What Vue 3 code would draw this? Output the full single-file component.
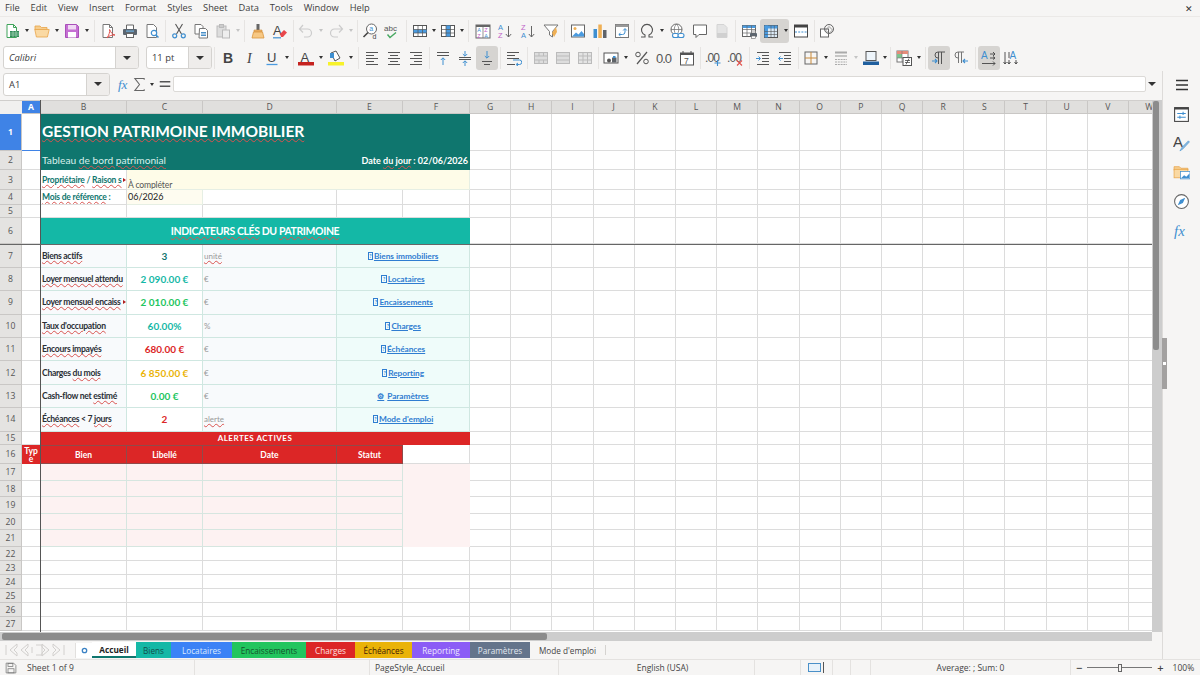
<script setup>
// toolbar icons, 16x16 viewBox
const lines = (ys, x1, x2, c = '#555') => ys.map((y, i) => {
  const a = Array.isArray(x1) ? x1[i] : x1
  const b = Array.isArray(x2) ? x2[i] : x2
  return `<path d="M${a} ${y}H${b}" stroke="${c}" fill="none"/>`
}).join('')
const table = (extra = '', c = '#666') => `<rect x="1.500" y="2.500" width="13" height="11" fill="#fff" stroke="${c}"/>${extra}<path d="M1.500 6.500h13M1.500 10h13M6 2.500v11M10.500 2.500v11" stroke="${c}" stroke-width=".7" fill="none"/>`
const icons = {
  new: `<path d="M3 1.500h6.500l3 3V14.500H3z" fill="#fff" stroke="#3fa35a"/><path d="M9.500 1.500v3h3" fill="none" stroke="#3fa35a"/><rect x="6" y="8" width="9" height="6" fill="#2e8b57"/><path d="M6 10h9M6 12h9M9 8v6M12 8v6" stroke="#bfe3c9" stroke-width=".6"/>`,
  open: `<path d="M1 4V3h5l1.500 1.500H13V7H1z" fill="#f6cd8d" stroke="#e8a54a" stroke-width=".8"/><path d="M.8 6.500h14.400L13.400 14H2.400z" fill="#fad9a3" stroke="#e8a54a" stroke-width=".8"/>`,
  save: `<path d="M1.500 1.500h11l2 2v11h-13z" fill="#c56fd3" stroke="#a94fb9"/><rect x="4" y="2" width="8" height="4.500" fill="#f0d9f4"/><rect x="4" y="9" width="8" height="5.500" fill="#fff"/>`,
  pdf: `<path d="M3 1.500h6.500l3 3V14.500H3z" fill="#fff" stroke="#777"/><path d="M9.500 1.500v3h3" fill="none" stroke="#777"/><path d="M7 15c2-3 3-6 2.600-8.500C11 9.500 12 11.500 15 12c-3-.2-6 .6-8 3z" fill="none" stroke="#e0524d" stroke-width="1"/>`,
  print: `<path d="M4.500 6V2h7v4" fill="#fff" stroke="#666"/><rect x="1" y="6" width="14" height="6" rx="1" fill="#5c6670"/><rect x="4" y="7.500" width="8" height="1.200" fill="#6fb1e0"/><rect x="4.500" y="10.500" width="7" height="4" fill="#fff" stroke="#666"/>`,
  preview: `<path d="M3 1.500h6.500l3 3V14.500H3z" fill="#fff" stroke="#777"/><circle cx="10" cy="10" r="2.700" fill="#fff" stroke="#3f8fd0" stroke-width="1.200"/><path d="M12 12l2.500 2.500" stroke="#3f8fd0" stroke-width="1.500"/>`,
  cut: `<path d="M4.500 1l6 10M11.500 1l-6 10" stroke="#555" stroke-width="1.100" fill="none"/><circle cx="3.700" cy="12.800" r="2" fill="none" stroke="#3f8fd0" stroke-width="1.200"/><circle cx="12.300" cy="12.800" r="2" fill="none" stroke="#3f8fd0" stroke-width="1.200"/>`,
  copy: `<path d="M2 1.500h6l2 2V11H2z" fill="#fff" stroke="#777"/><path d="M6.500 5.500h6l2 2V15h-8.500z" fill="#fff" stroke="#777"/>${lines([9.500, 11, 12.500], 8, 13, '#4a90c8')}`,
  paste: `<rect x="2" y="3" width="9" height="11" fill="#ddd" stroke="#bbb"/><rect x="4.500" y="1.500" width="4" height="3" fill="#ccc" stroke="#bbb"/><rect x="7.500" y="7" width="7" height="8" fill="#eee" stroke="#bbb"/>`,
  clone: `<rect x="6.500" y="1" width="3" height="6" fill="#666"/><path d="M4 7h8v2H4z" fill="#f2b66a" stroke="#c98a3a" stroke-width=".6"/><path d="M3.500 9h9L14 15H2z" fill="#f7c884" stroke="#d9963e" stroke-width=".8"/>`,
  clear: `<text x="1" y="12" font-size="13" font-family="Liberation Sans" fill="#444">A</text><path d="M8 11l4-4 3 2.500-4 4.500H9z" fill="#e8474c"/><path d="M1 14.800h8" stroke="#3f8fd0" stroke-width="1.200"/>`,
  undo: `<path d="M5 2L1.500 6 5 9.500M2 6h7.500a4 4 0 0 1 0 8H6" fill="none" stroke="#ccc" stroke-width="1.200"/>`,
  redo: `<path d="M11 2l3.500 4L11 9.500M14 6H6.500a4 4 0 0 0 0 8H10" fill="none" stroke="#ccc" stroke-width="1.200"/>`,
  find: `<circle cx="9.500" cy="6" r="5" fill="#fff" stroke="#666"/><path d="M6 9.500L1.500 14" stroke="#444" stroke-width="1.600"/><text x="7.200" y="8" font-size="7" font-family="Liberation Sans" fill="#3f8fd0">a</text><text x="10.500" y="15.500" font-size="7" font-family="Liberation Sans" fill="#444">d</text>`,
  spell: `<text x="0" y="8" font-size="8" font-family="Liberation Sans" fill="#555">abc</text><path d="M3.500 11.500l2.500 3 6-5" fill="none" stroke="#46a860" stroke-width="1.400"/>`,
  rows: table('<rect x="1.500" y="6.500" width="13" height="3.500" fill="#4a9be0"/>', '#555'),
  cols: table('<rect x="6" y="2.500" width="4.500" height="11" fill="#4a9be0"/>', '#555'),
  sort: `<rect x="1" y="2" width="14" height="13" fill="#fff" stroke="#666"/><rect x="1" y="2" width="14" height="2" fill="#666"/><path d="M8 4v11" stroke="#666" stroke-width=".7"/><text x="2.300" y="9" font-size="5.500" font-family="Liberation Sans" fill="#3f8fd0">A</text><text x="2.300" y="14.500" font-size="5.500" font-family="Liberation Sans" fill="#c060c8">Z</text><text x="9.300" y="9" font-size="5.500" font-family="Liberation Sans" fill="#c060c8">Z</text><text x="9.300" y="14.500" font-size="5.500" font-family="Liberation Sans" fill="#3f8fd0">A</text>`,
  asc: `<text x="1" y="7" font-size="7.500" font-family="Liberation Sans" fill="#3f8fd0">A</text><text x="1" y="15" font-size="7.500" font-family="Liberation Sans" fill="#c060c8">Z</text><path d="M11.500 3v11M8.800 11l2.700 3 2.700-3" fill="none" stroke="#666"/>`,
  desc: `<text x="1" y="7" font-size="7.500" font-family="Liberation Sans" fill="#c060c8">Z</text><text x="1" y="15" font-size="7.500" font-family="Liberation Sans" fill="#3f8fd0">A</text><path d="M11.500 3v11M8.800 11l2.700 3 2.700-3" fill="none" stroke="#666"/>`,
  filter: `<path d="M1 2h14L9.500 8.500V14L6.500 12V8.500z" fill="#fff" stroke="#777"/><path d="M9 10l4-6 1 5-3 5z" fill="#efb055"/>`,
  image: `<rect x="1.500" y="2" width="13" height="12" fill="#fff" stroke="#666"/><circle cx="5" cy="5.500" r="1.500" fill="#efb055"/><path d="M2 13.500l4-4 2.500 2 3-3.500 2.500 3v2.500z" fill="#4a9be0"/>`,
  chart: `<rect x="1.500" y="6" width="3.500" height="9" fill="#3f8fd0"/><rect x="6.300" y="1.500" width="3.500" height="13.500" fill="#efb055"/><rect x="11" y="7" width="3.500" height="8" fill="#5f6368"/>`,
  pivot: `<rect x="1.500" y="1.500" width="13" height="13" fill="#fff" stroke="#777"/><rect x="1.500" y="1.500" width="13" height="2.500" fill="#999"/><path d="M5 11.500h3.500a2.500 2.500 0 0 0 2.500-2.500V6M9.200 7.500L11 5.500l1.800 2M6.500 10l-1.700 1.500 1.700 1.500" fill="none" stroke="#3f8fd0"/>`,
  omega: `<path d="M2 14h4v-2a5.500 5.500 0 1 1 4 0v2h4" fill="none" stroke="#555" stroke-width="1.100"/>`,
  link: `<circle cx="7.500" cy="6.500" r="5.500" fill="#fff" stroke="#666"/><path d="M2 6.500h11M7.500 1c-3 3-3 8 0 11M7.500 1c3 3 3 8 0 11" fill="none" stroke="#666" stroke-width=".7"/><rect x="3.500" y="10.500" width="6" height="4" rx="2" fill="#fff" stroke="#3f8fd0" stroke-width="1.100"/><rect x="9" y="10.500" width="6" height="4" rx="2" fill="#fff" stroke="#3f8fd0" stroke-width="1.100"/>`,
  comment: `<path d="M1.500 2h13v9.500H7L4 14.500v-3H1.500z" fill="#fff" stroke="#666"/>`,
  headers: `<path d="M3 1.500h7l3 3V14.500H3z" fill="#e4e4e4" stroke="#d4d4d4"/><rect x="3" y="10" width="10" height="4.500" fill="#d0d0d0"/>`,
  freezep: `${table('<rect x="1.500" y="2.500" width="13" height="2.500" fill="#4a9be0"/>', '#666')}<rect x="9" y="10" width="7" height="4" rx="1" fill="#5c6670"/><rect x="10.500" y="8" width="4" height="2" fill="#fff" stroke="#666" stroke-width=".6"/><rect x="10.500" y="13" width="4" height="2.500" fill="#fff" stroke="#666" stroke-width=".6"/>`,
  freeze: `<rect x="1.500" y="2.500" width="13" height="12" fill="#dcebf7" stroke="#555"/><rect x="1.500" y="2.500" width="13" height="3" fill="#4a9be0"/><rect x="1.500" y="2.500" width="3.500" height="12" fill="#4a9be0"/><path d="M1.500 8.500h13M1.500 11.500h13M8 2.500v12M11.300 2.500v12" stroke="#555" stroke-width=".6"/>`,
  split: `<rect x="1.500" y="2" width="13" height="12" fill="#fff" stroke="#444"/><rect x="1.500" y="2" width="13" height="2.500" fill="#444"/><path d="M2 9h12" stroke="#3f8fd0" stroke-dasharray="2 1.200"/>`,
  shapes: `<rect x="1.500" y="6" width="8" height="8" fill="#fff" stroke="#666"/><circle cx="10" cy="6" r="4.500" fill="none" stroke="#666"/><path d="M10 3.500L13.500 7 10 10.500 6.500 7z" fill="none" stroke="#777" stroke-width=".7"/>`,
  bold: `<text x="3" y="13" font-size="14" font-weight="700" font-family="Liberation Sans" fill="#444">B</text>`,
  italic: `<text x="5" y="13" font-size="14" font-style="italic" font-family="Liberation Serif" fill="#444">I</text>`,
  under: `<text x="3" y="12" font-size="13" font-family="Liberation Sans" fill="#444">U</text><path d="M2.500 14.500h11" stroke="#4a9be0" stroke-width="1.300"/>`,
  color: `<text x="2.500" y="11.500" font-size="13" font-family="Liberation Sans" fill="#444">A</text><rect x="0" y="12" width="16" height="3.500" fill="#c5221f"/>`,
  hilite: `<path d="M3 3l5-2 4 7-5 3z" fill="#fff" stroke="#555"/><path d="M2 3h4v5H2z" fill="#3f8fd0"/><rect x="0" y="12" width="16" height="3.500" fill="#f7f22a"/>`,
  left: lines([2.500, 5.500, 8.500, 11.500, 14.500], 2, [14, 10, 14, 10, 14]),
  center: lines([2.500, 5.500, 8.500, 11.500, 14.500], [2, 4, 2, 4, 2], [14, 12, 14, 12, 14]),
  right: lines([2.500, 5.500, 8.500, 11.500, 14.500], [2, 6, 2, 6, 2], 14),
  top: `${lines([2.500, 5.500], 2, 14)}<path d="M8 15V8M5.800 10L8 7.800 10.200 10" fill="none" stroke="#3f8fd0"/>`,
  vmid: `${lines([7.500, 9.500], 2, 14)}<path d="M8 1v5M5.800 4L8 6.200 10.200 4M8 16v-5M5.800 13L8 10.800 10.200 13" fill="none" stroke="#3f8fd0"/>`,
  bottom: `${lines([11.500, 14.500], [3, 5], [13, 11])}<path d="M8 1v7M5.800 6L8 8.200 10.200 6" fill="none" stroke="#3f8fd0"/>`,
  wrap: `${lines([2.500, 5.500, 8.500, 14.500], 1, [13, 9, 13, 9])}<path d="M11 14.500h2.500a2 2 0 0 0 0-4.500H7M12 13l-2 1.500 2 1.500" fill="none" stroke="#3f8fd0"/>`,
  merge: `<rect x="1.500" y="2.500" width="13" height="11" fill="#ddd" stroke="#bbb"/><path d="M1.500 6h13M1.500 10h13M6 2.500v3.500M10.500 2.500v3.500M6 10v3.500M10.500 10v3.500" stroke="#bbb" fill="none"/>`,
  unmerge: `<rect x="1.500" y="2.500" width="13" height="11" fill="#ddd" stroke="#bbb"/><path d="M1.500 6h13M1.500 10h13" stroke="#bbb" fill="none"/>`,
  split3: `<rect x="1.500" y="2.500" width="13" height="11" fill="#e4e4e4" stroke="#bbb"/><path d="M1.500 6h13M1.500 10h13M6 2.500v11M10.500 2.500v11" stroke="#bbb" fill="none"/>`,
  money: `<rect x="1" y="3" width="14" height="10" fill="#fff" stroke="#555"/><circle cx="6" cy="10.500" r="2" fill="#555"/><rect x="9" y="7.500" width="4.500" height="5" fill="#5f6368"/><rect x="10" y="6" width="2.500" height="2" fill="#3f8fd0"/>`,
  percent: `<path d="M3 14L13 2" stroke="#555" stroke-width="1.200"/><circle cx="4" cy="4.500" r="2.300" fill="none" stroke="#555"/><circle cx="12" cy="11.500" r="2.300" fill="none" stroke="#555"/>`,
  number: `<text x="0" y="13" font-size="13" font-family="Liberation Sans" fill="#555" textLength="16">0.0</text>`,
  date: `<rect x="1.500" y="3" width="13" height="12" fill="#fff" stroke="#555"/><rect x="1.500" y="3" width="13" height="2" fill="#555"/><path d="M4 1v3M12 1v3" stroke="#555"/><text x="5" y="13.500" font-size="8.500" font-family="Liberation Sans" fill="#555">7</text>`,
  addDec: `<text x="0" y="12" font-size="12" font-family="Liberation Sans" fill="#555" textLength="15">.00</text><path d="M12.500 10v6M9.500 13h6" stroke="#3f8fd0" stroke-width="1.100"/>`,
  delDec: `<text x="0" y="12" font-size="12" font-family="Liberation Sans" fill="#555" textLength="15">.00</text><path d="M10 10.500l5 5M15 10.500l-5 5" stroke="#e0524d" stroke-width="1.100"/>`,
  indent: `${lines([2.500, 5.500, 8.500, 11.500, 14.500], [2, 7, 7, 7, 2], 14)}<path d="M1 8.500h4M3.500 6.500l2 2-2 2" fill="none" stroke="#3f8fd0"/>`,
  outdent: `${lines([2.500, 5.500, 8.500, 11.500, 14.500], [2, 7, 7, 7, 2], 14)}<path d="M6 8.500H1.500M3.500 6.500l-2 2 2 2" fill="none" stroke="#3f8fd0"/>`,
  border: `<rect x="2" y="2" width="12" height="12" fill="none" stroke="#666"/><path d="M8 2v12M2 8h12" stroke="#c98a3a"/>`,
  line: `<path d="M2 2.500h12" stroke="#aaa" stroke-width="2"/><path d="M2 6h12" stroke="#aaa" stroke-width="1.300"/><path d="M2 9.500h12M2 12h12M2 14.500h12" stroke="#aaa" stroke-dasharray="2 .8"/>`,
  bcolor: `<rect x="3" y="1.500" width="10" height="9" fill="#eef5fb" stroke="#555"/><rect x="0" y="11.500" width="16" height="3.500" fill="#1f5f9e"/>`,
  cond: `<rect x="1" y="1" width="11" height="11" fill="#fff" stroke="#777"/><rect x="1" y="1" width="11" height="3" fill="#e58c7a"/><rect x="1" y="4" width="5" height="4" fill="#7ec48f"/><path d="M1 8h11M6 1v11" stroke="#777" stroke-width=".6"/><rect x="7" y="7.500" width="8.500" height="8" fill="#fff" stroke="#555"/><path d="M9 10.500h5M9 12.500h5M10 14.500l3-6" stroke="#333" stroke-width=".7"/>`,
  ltr: `<path d="M7.500 2v12M10.500 2v12M14 2H7A3 3 0 0 0 7 8h.5" fill="none" stroke="#555"/><path d="M1 11h5M4 9l2 2-2 2" fill="none" stroke="#3f8fd0" stroke-width="1.100"/>`,
  rtl: `<path d="M5.500 2v11M8.500 2v11M11 2H5A3 3 0 0 0 5 8h.5" fill="none" stroke="#777"/><path d="M15 11h-5M12 9l-2 2 2 2" fill="none" stroke="#3f8fd0" stroke-width="1.100"/>`,
  horiz: `<text x="0" y="9" font-size="10" font-family="Liberation Sans" fill="#3f8fd0">A</text><path d="M9 4h5M12 2l2 2-2 2M9 8h5M12 6.500l2 1.500-2 1.500M1 13.500h13M12 11.500l2 2-2 2" fill="none" stroke="#444" stroke-width=".9"/>`,
  vert: `<text x="6.500" y="9" font-size="10" font-family="Liberation Sans" fill="#3f8fd0">A</text><path d="M2 2v12M.5 12l1.500 2 1.500-2M6 10v4M4.500 12l1.500 2 1.500-2M13 10v4M11.500 12l1.500 2 1.500-2" fill="none" stroke="#444" stroke-width=".9"/><path d="M6 2v6" stroke="#444" stroke-width=".9"/>`,
  fx: `<text x="1" y="13" font-size="14" font-style="italic" font-family="Liberation Serif" fill="#3f8fd0">fx</text>`,
  sum: `<path d="M13 3V1.500H3L8 8l-5 6.500h10V13" fill="none" stroke="#666" stroke-width="1.100"/>`,
  equals: `<path d="M2 5.500h12M2 10.500h12" stroke="#555" stroke-width="1.800"/>`,
  burger: `<path d="M2 3.500h12M2 8h12M2 12.500h12" stroke="#333" stroke-width="1.300"/>`,
  props: `<rect x="1.500" y="1.500" width="13" height="13" fill="#fff" stroke="#444"/><rect x="1.500" y="1.500" width="13" height="1.800" fill="#444"/><path d="M4 7h8M4 10.500h8" stroke="#3f8fd0"/><path d="M9.500 5.500v3M6.500 9v3" stroke="#3f8fd0"/>`,
  styles: `<text x="0" y="11.500" font-size="14" font-family="Liberation Sans" fill="#444">A</text><path d="M6.500 15l2-3.500 6-6 1 1-6 6.500z" fill="#8ab8de" stroke="#3f8fd0" stroke-width=".5"/>`,
  gallery: `<path d="M1 4V2.500h5L7.500 4H14v2H1z" fill="#f6cd8d" stroke="#e8a54a" stroke-width=".7"/><rect x="1" y="5" width="13" height="8" fill="#fad9a3" stroke="#e8a54a" stroke-width=".7"/><rect x="7" y="7" width="9" height="7" fill="#fff" stroke="#3f8fd0" stroke-width=".7"/><path d="M7.500 13.500l3-3 2 1.500 3-3v4.500z" fill="#3f8fd0"/>`,
  navigator: `<circle cx="8" cy="8" r="6.500" fill="#fff" stroke="#666"/><path d="M11.500 4.500L9.300 9.300 4.500 11.500 6.700 6.700z" fill="#3f8fd0"/>`,
  disk: `<path d="M1.500 1.500h10l3 3v10h-13z" fill="none" stroke="#777"/><rect x="4" y="2" width="6.500" height="4" fill="none" stroke="#777"/><rect x="4" y="9" width="8" height="5.500" fill="none" stroke="#777"/>`
}

// toolbar tokens: name = icon, v = dropdown arrow, |n = separator, _n = gap
const combo = (text, w, arrow, cls = '') => ({ combo: true, text, w, arrow, cls })
const bars = [
  [
    '_1', 'new', 'v', 'open', 'v', 'save', 'v', '|6', 'pdf', 'print', 'preview', '|5', 'cut', 'copy', 'paste', 'vd', '|5',
    'clone', 'clear', '|4', 'undo', 'vd', 'redo', 'vd', '|4', 'find', 'spell', '|6', 'rows', 'v6', 'cols', 'v6', '|7',
    'sort', 'asc', '_1', 'desc', '_1', 'filter', '|5', 'image', 'chart', 'pivot', '|3', 'omega', 'v', 'link', '_1', 'comment', 'headers', '|5',
    'freezep', { i: 'freeze', on: 'l' }, { dd: 7, on: 'r' }, '_1', 'split', '|4', 'shapes'
  ],
  [
    '_3', combo('Calibri', 136, 23, 'italic'), '_7', combo('11 pt', 66, 23), '|5', 'bold', 'italic', 'under', 'v', '|4', 'color', 'v', 'hilite', 'v', '|6',
    'left', 'center', 'right', '|5', 'top', 'vmid', { i: 'bottom', on: 'a' }, '|5', 'wrap', '|5', 'merge', 'unmerge', 'split3', '|4',
    'money', 'v', '_1', 'percent', 'number', '_1', 'date', '|4', 'addDec', 'delDec', '|6', 'indent', 'outdent', '|4',
    'border', 'v', 'line', 'vd', 'bcolor', 'v6', '|5', 'cond', 'v', '|5', { i: 'ltr', on: 'a' }, 'rtl', '|6', { i: 'horiz', on: 'a' }, 'vert'
  ]
].map((bar) => bar.map((t) => {
  if (typeof t !== 'string') return t
  if (t[0] === '|') return { sep: +t.slice(1) }
  if (t[0] === '_') return { gap: +t.slice(1) }
  if (t === 'v') return { dd: 8 }
  if (t === 'vd') return { dd: 8, off: true }
  if (t === 'v6') return { dd: 6 }
  return { i: t }
}))

const menus = ['File', 'Edit', 'View', 'Insert', 'Format', 'Styles', 'Sheet', 'Data', 'Tools', 'Window', 'Help']
const sideIcons = ['props', 'styles', 'gallery', 'navigator', 'fx']

// the sheet
const colNames = 'ABCDEFGHIJKLMNOPQRSTUVW'.split('')
const rowHeights = [37, 19, 20, 14.5, 13.5, 26, 24, 23, 23.5, 23.5, 23, 24, 23, 23.5, 13.5, 19, 17, 16, 17, 16, 17, 14, 14, 14, 14, 14, 14]

// [..] marks the words the spell checker underlines
const kpis = [
  ['[Biens actifs]', '3', 'dark', '[unité]', 'Biens immobiliers'],
  ['[Loyer mensuel attendu]', '2 090.00 €', 'teal', '€', 'Locataires'],
  ['[Loyer mensuel encaiss]', '2 010.00 €', 'green', '€', 'Encaissements'],
  ["[Taux d'occupation]", '60.00%', 'teal', '%', 'Charges'],
  ['[Encours impayés]', '680.00 €', 'red', '€', 'Échéances'],
  ['Charges [du mois]', '6 850.00 €', 'amber', '€', 'Reporting'],
  ['Cash-flow net [estimé]', '0.00 €', 'green', '€', 'Paramètres'],
  ['[Échéances] < 7 [jours]', '2', 'red', '[alerte]', "Mode d'emploi"]
]

const parts = (text) => text.split(/(\[[^\]]*\])/).filter(Boolean).map((p) => (
  p[0] === '[' ? { t: p.slice(1, -1), wave: true } : { t: p, wave: false }
))

const c = (span, cls = '', text = '', extra = {}) => ({ span, cls, parts: parts(text), ...extra })

function leftCells(n) {
  if (n === 1) return [c(1, 'cursor'), c(5, 'teal-bg title', '[GESTION PATRIMOINE IMMOBILIER]')]
  if (n === 2) return [c(1), c(3, 'teal-bg subtitle', 'Tableau [de bord patrimonial]'), c(2, 'teal-bg today', 'Date [du jour] : 02/06/2026')]
  if (n === 3) return [c(1), c(1, 'meta', '[Propriétaire] / [Raison s]', { more: true }), c(4, 'cream todo', 'À [compléter]')]
  if (n === 4) return [c(1), c(1, 'meta', '[Mois de référence] :'), c(1, 'cream month', '06/2026'), c(1), c(1), c(1)]
  if (n === 6) return [c(1), c(5, 'section', '[INDICATEURS CLÉS] DU [PATRIMOINE]')]
  if (n >= 7 && n <= 14) {
    const [label, value, tone, unit, link] = kpis[n - 7]
    return [
      c(1),
      c(1, 'kpi-label', label, { more: n === 9 }),
      c(1, 'kpi-value ' + tone, value),
      c(1, 'kpi-unit', unit),
      c(2, 'kpi-link', link, { gear: n === 13, tofu: n !== 13 })
    ]
  }
  if (n === 15) return [c(1), c(5, 'alert-title', 'ALERTES ACTIVES')]
  if (n === 16) return [c(1, 'alert-head type', 'Type'), c(1, 'alert-head', 'Bien'), c(1, 'alert-head', 'Libellé'), c(1, 'alert-head', 'Date'), c(1, 'alert-head', 'Statut'), c(1)]
  if (n >= 17 && n <= 21) return [c(1), c(1, 'pink'), c(1, 'pink'), c(1, 'pink'), c(1, 'pink'), c(1, 'pink-merged')]
  return [c(1), c(1), c(1), c(1), c(1), c(1)]
}

const rows = rowHeights.map((h, idx) => ({
  n: idx + 1,
  h,
  cells: [...leftCells(idx + 1), ...colNames.slice(6).map(() => c(1))]
}))

const tabs = [
  { name: 'Accueil', w: 44, cls: 'current' },
  { name: 'Biens', w: 35, bg: '#14b8a6', fg: '#134e4a' },
  { name: 'Locataires', w: 61, bg: '#3b82f6', fg: '#dbeafe' },
  { name: 'Encaissements', w: 74, bg: '#22c55e', fg: '#14532d' },
  { name: 'Charges', w: 49, bg: '#dc2626', fg: '#fee2e2' },
  { name: 'Échéances', w: 57, bg: '#eab308', fg: '#422006' },
  { name: 'Reporting', w: 58, bg: '#8b5cf6', fg: '#ede9fe' },
  { name: 'Paramètres', w: 60, bg: '#64748b', fg: '#e2e8f0' },
  { name: "Mode d'emploi", w: 75, cls: 'plain' }
]
</script>

<template>
  <div class="app">
    <div class="menubar">
      <span v-for="m in menus" :key="m" class="menu">{{ m }}</span>
      <span class="close">✕</span>
    </div>

    <div v-for="(bar, b) in bars" :key="b" class="toolbar">
      <template v-for="(it, k) in bar" :key="k">
        <div v-if="it.combo" class="combo" :class="it.cls" :style="{ width: it.w + 'px' }">
          <span class="combo-text">{{ it.text }}</span>
          <span class="combo-arrow" :style="{ width: it.arrow + 'px' }"><i class="caret"></i></span>
        </div>
        <span v-else-if="it.sep" class="sep" :style="{ width: it.sep + 'px' }"></span>
        <span v-else-if="it.gap" :style="{ width: it.gap + 'px' }"></span>
        <span v-else-if="it.dd" class="dd" :class="[it.on && 'on-' + it.on, { off: it.off }]" :style="{ width: it.dd + 'px' }"><i class="mini"></i></span>
        <span v-else class="btn" :class="it.on && 'on-' + it.on">
          <svg viewBox="0 0 16 16" width="16" height="16" v-html="icons[it.i]"></svg>
        </span>
      </template>
    </div>

    <div class="body">
      <div class="main">
        <div class="formula">
          <div class="combo namebox">
            <span class="combo-text">A1</span>
            <span class="combo-arrow"><i class="caret"></i></span>
          </div>
          <span class="fbtn first"><svg viewBox="0 0 16 16" width="16" height="16" v-html="icons.fx"></svg></span>
          <span class="fbtn"><svg viewBox="0 0 16 16" width="15" height="15" v-html="icons.sum"></svg></span>
          <span class="dd small"><i class="mini"></i></span>
          <span class="fbtn"><svg viewBox="0 0 16 16" width="14" height="14" v-html="icons.equals"></svg></span>
          <div class="finput"></div>
          <span class="fend"><i class="caret"></i></span>
        </div>

        <div class="sheet-wrap">
          <div class="sheet">
            <div class="head-row grid-cols">
              <span class="corner"></span>
              <span v-for="name in colNames" :key="name" class="col-head" :class="{ sel: name === 'A' }">{{ name }}</span>
            </div>
            <div v-for="r in rows" :key="r.n" class="row grid-cols" :style="{ height: r.h + 'px' }">
              <span class="row-head" :class="{ sel: r.n === 1 }">{{ r.n }}</span>
              <div
                v-for="(cell, i) in r.cells"
                :key="i"
                class="cell"
                :class="cell.cls"
                :style="{ gridColumn: 'span ' + cell.span }"
              >
                <span v-if="cell.tofu" class="tofu">?</span>
                <span v-if="cell.gear" class="gear">⚙</span>
                <span v-if="cell.parts.length" class="txt">
                  <span v-for="(p, j) in cell.parts" :key="j" :class="{ wave: p.wave }">{{ p.t }}</span>
                </span>
                <i v-if="cell.more" class="more"></i>
              </div>
            </div>
            <div class="freeze-v"></div>
            <div class="freeze-h"></div>
          </div>
          <div class="vscroll"><div class="vthumb"></div></div>
        </div>

        <div class="hscroll"><div class="hthumb"></div></div>

        <div class="tabbar">
          <div class="tabnav">
            <svg viewBox="0 0 60 14" width="60" height="14">
              <g fill="none" stroke="#d2d0ce" stroke-width="1">
                <path d="M1 2v10M12 1L5 7l7 6V10L9 7l3-3z" />
                <path d="M23 1l-7 6 7 6V10L20 7l3-3z" />
                <path d="M31 2h6v10h-6M27 4v6" />
                <path d="M37 1l7 6-7 6V10l3-3-3-3z" />
                <path d="M48 1l7 6-7 6V10l3-3-3-3zM59 2v10" />
              </g>
            </svg>
          </div>
          <span class="addtab">
            <svg viewBox="0 0 8 8" width="7" height="7"><circle cx="4" cy="4" r="2.500" fill="none" stroke="#3b82c4" stroke-width="1.500" /></svg>
          </span>
          <span
            v-for="t in tabs"
            :key="t.name"
            class="tab"
            :class="t.cls"
            :style="{ width: t.w + 'px', background: t.bg, color: t.fg }"
          >{{ t.name }}</span>
        </div>
      </div>

      <div class="sidebar">
        <span class="side-btn burger"><svg viewBox="0 0 16 16" width="16" height="16" v-html="icons.burger"></svg></span>
        <span v-for="s in sideIcons" :key="s" class="side-btn"><svg viewBox="0 0 16 16" width="17" height="17" v-html="icons[s]"></svg></span>
        <span class="grip"></span>
      </div>
    </div>

    <div class="status">
      <span class="st st-disk"><svg viewBox="0 0 16 16" width="12" height="12" v-html="icons.disk"></svg></span>
      <span class="st st-sheet">Sheet 1 of 9</span>
      <span class="st st-blank"></span>
      <span class="st st-style">PageStyle_Accueil</span>
      <span class="st st-lang">English (USA)</span>
      <span class="st st-e1"></span>
      <span class="st st-sel"><i class="selbox"></i><i class="ibeam"></i></span>
      <span class="st st-e2"></span>
      <span class="st st-e3"></span>
      <span class="st st-sum">Average: ; Sum: 0</span>
      <span class="st st-zoom">
        <b>−</b><i class="slider"><i class="knob"></i></i><b>+</b><em>100%</em>
      </span>
    </div>
  </div>
</template>

<style>
html,
body {
  margin: 0;
  overflow: hidden;
}
</style>

<style scoped>
.app {
  width: 1200px;
  height: 675px;
  display: flex;
  flex-direction: column;
  overflow: hidden;
  background: #f6f5f4;
  color: #3d3d3d;
  font-family: "Open Sans", "Liberation Sans", sans-serif;
  font-size: 9.3px;
}

.menubar {
  height: 17px;
  flex: none;
  display: flex;
  align-items: center;
  gap: 10.85px;
  padding: 0 0 1px 5px;
  border-bottom: 1px solid #ebe9e7;
  box-sizing: border-box;
  font-size: 9.3px;
  position: relative;
}
.close {
  position: absolute;
  right: 7px;
  top: 2px;
  font-size: 9px;
  color: #333;
}

.toolbar {
  height: 27px;
  flex: none;
  display: flex;
  align-items: center;
}
.btn {
  width: 22px;
  height: 24px;
  flex: none;
  display: flex;
  align-items: center;
  justify-content: center;
}
.btn svg {
  display: block;
}
.on-a {
  background: #d6d4d1;
  border-radius: 3px;
}
.on-l {
  background: #d6d4d1;
  border-radius: 3px 0 0 3px;
}
.on-r {
  background: #d6d4d1;
  border-radius: 0 3px 3px 0;
}
.dd {
  height: 24px;
  flex: none;
  display: flex;
  align-items: center;
  justify-content: center;
}
.dd.small {
  width: 10px;
}
.mini {
  width: 0;
  height: 0;
  border: 2.5px solid transparent;
  border-top: 3px solid #333;
  border-bottom: 0;
}
.dd.off .mini {
  border-top-color: #c4c4c4;
}
.sep {
  height: 22px;
  flex: none;
  display: flex;
  justify-content: center;
  position: relative;
}
.sep::after {
  content: "";
  width: 1px;
  height: 100%;
  background: #e6e4e2;
}

.combo {
  height: 23px;
  flex: none;
  display: flex;
  box-sizing: border-box;
  background: #fff;
  border: 1px solid #d5d3d0;
  border-radius: 3px;
  font-size: 9.4px;
  overflow: hidden;
}
.combo.italic .combo-text {
  font-style: italic;
}
.combo-text {
  flex: 1;
  padding-left: 5px;
  display: flex;
  align-items: center;
}
.combo-arrow {
  flex: none;
  width: 23px;
  background: #efedeb;
  border-left: 1px solid #d5d3d0;
  box-sizing: border-box;
  display: flex;
  align-items: center;
  justify-content: center;
}
.caret {
  width: 0;
  height: 0;
  border: 4px solid transparent;
  border-top: 4px solid #333;
  border-bottom: 0;
}

.body {
  flex: 1;
  min-height: 0;
  display: flex;
}
.main {
  width: 1162px;
  flex: none;
  display: flex;
  flex-direction: column;
}

.formula {
  height: 29px;
  flex: none;
  display: flex;
  align-items: center;
  padding: 0 0 3px 3px;
  box-sizing: border-box;
}
.namebox {
  width: 107px;
}
.fbtn {
  width: 15px;
  display: flex;
  justify-content: center;
}
.fbtn.first {
  margin-left: 7px;
}
.finput {
  width: 973px;
  height: 16px;
  margin-left: 1px;
  box-sizing: border-box;
  background: #fff;
  border: 1px solid #dcdad7;
  border-radius: 2px;
}
.fend {
  width: 12px;
  display: flex;
  justify-content: center;
}

.sheet-wrap {
  flex: 1;
  min-height: 0;
  display: flex;
}
.sheet {
  width: 1152px;
  flex: none;
  position: relative;
  background: #fff;
  overflow: hidden;
}
.grid-cols {
  display: grid;
  grid-template-columns: 22px 19px 86px 76px 134px 66px 67px repeat(17, 41.2px);
}
.head-row {
  height: 14px;
  background: #e0dfdd;
  border-top: 1px solid #d0cecc;
  box-sizing: border-box;
}
.corner {
  background: #f1f0ef;
}
.col-head {
  display: flex;
  align-items: center;
  justify-content: center;
  border-right: 1px solid #c9c7c5;
  border-bottom: 1px solid #c9c7c5;
  box-sizing: border-box;
  font-size: 8.6px;
  color: #555;
  overflow: hidden;
}
.col-head.sel {
  background: #3f83e6;
  color: #fff;
  font-weight: 700;
}
.row-head {
  display: flex;
  align-items: center;
  justify-content: center;
  background: #e4e3e1;
  border-right: 1px solid #c9c7c5;
  border-bottom: 1px solid #c9c7c5;
  box-sizing: border-box;
  font-size: 8.6px;
  color: #555;
}
.row-head.sel {
  background: #3f83e6;
  color: #fff;
  font-weight: 700;
}
.cell {
  box-sizing: border-box;
  min-width: 0;
  border-right: 1px solid #dcdcdc;
  border-bottom: 1px solid #dcdcdc;
  display: flex;
  align-items: center;
  overflow: hidden;
  white-space: pre;
  position: relative;
  font-family: Lato, "Open Sans", sans-serif;
  font-size: 9px;
  color: #222;
  padding: 0 1px;
}
.txt {
  flex: none;
}
.wave {
  text-decoration: underline wavy #d9534f 0.8px;
  text-underline-offset: 0.5px;
}
.cell.cursor {
  border: 0;
  border-bottom: 1.5px solid #3f83e6;
}
.teal-bg {
  background: #0f766e;
  color: #fff;
  border-color: #0f766e;
}
.title {
  font-size: 15.5px;
  font-weight: 700;
  padding-bottom: 3px;
}
.subtitle {
  font-size: 10.2px;
  color: #d8efeb;
}
.today {
  font-size: 9px;
  font-weight: 700;
  justify-content: flex-end;
}
.meta {
  color: #0f766e;
  font-weight: 700;
  font-size: 8.5px;
  letter-spacing: -0.2px;
}
.cream {
  background: #fefce8;
  border-color: #e6efe4;
}
.todo {
  align-items: flex-end;
  color: #555;
  font-size: 8.6px;
  letter-spacing: -0.15px;
  line-height: 8px;
}
.month {
  font-size: 9px;
  color: #222;
  background: #fefcf0;
}
.section {
  background: #14b8a6;
  border-color: #14b8a6;
  color: #fff;
  font-size: 10.5px;
  font-weight: 700;
  letter-spacing: -0.4px;
  justify-content: center;
}
.kpi-label {
  background: #f8fafc;
  border-color: #cfe7e1;
  font-weight: 700;
  font-size: 8.6px;
  letter-spacing: -0.3px;
  color: #2a2f36;
}
.more {
  position: absolute;
  right: 0;
  top: 50%;
  margin-top: -2px;
  border: 2px solid transparent;
  border-left: 3px solid #b02020;
  border-right: 0;
}
.kpi-value {
  background: #fff;
  border-color: #cfe7e1;
  justify-content: center;
  font-size: 10px;
  font-weight: 700;
}
.dark {
  color: #0f766e;
}
.teal {
  color: #14b8a6;
}
.green {
  color: #22c55e;
}
.red {
  color: #dc2626;
}
.amber {
  color: #eab308;
}
.kpi-unit {
  background: #f8fafc;
  border-color: #cfe7e1;
  color: #999;
  font-size: 8px;
}
.kpi-link {
  background: #effcfa;
  border-color: #cfe7e1;
  justify-content: center;
  color: #2f7dd1;
  font-size: 8.3px;
  font-weight: 700;
  letter-spacing: -0.05px;
  text-decoration: underline;
}
.tofu {
  font-size: 5px;
  border: 0.5px solid #2f7dd1;
  line-height: 6px;
  margin-right: 1px;
  padding: 0 0.5px;
}
.gear {
  margin-right: 3px;
  font-size: 8px;
}
.alert-title {
  background: #dc2626;
  border-color: #dc2626;
  color: #fff;
  font-size: 8px;
  font-weight: 700;
  letter-spacing: 0.5px;
  justify-content: center;
}
.alert-head {
  background: #dc2626;
  border-color: #8f4a4a;
  border-top: 1px solid #8f4a4a;
  color: #fff;
  font-size: 8.5px;
  font-weight: 700;
  justify-content: center;
}
.type {
  white-space: normal;
  word-break: break-all;
  text-align: center;
  line-height: 8px;
  border-color: #dc2626;
}
.type .txt {
  flex: 1;
  min-width: 0;
}
.pink {
  background: #fdf2f2;
  border-color: #d6e6e0;
}
.pink-merged {
  background: #fdf2f2;
  border-color: #fdf2f2;
}
.freeze-v {
  position: absolute;
  left: 40px;
  top: 0;
  bottom: 0;
  width: 1px;
  background: #555;
}
.freeze-h {
  position: absolute;
  left: 0;
  right: 0;
  top: 143.5px;
  height: 1.5px;
  background: #666;
}

.vscroll {
  width: 10px;
  flex: none;
  background: #cdcdcd;
  padding: 1px 3px 0 1px;
  box-sizing: border-box;
}
.vthumb {
  height: 249px;
  background: #8c8c8c;
  border-radius: 2px;
}
.hscroll {
  height: 9px;
  flex: none;
  width: 1152px;
  background: #cdcdcd;
  padding: 1px 0 1px 2px;
  box-sizing: border-box;
}
.hthumb {
  width: 545px;
  height: 100%;
  background: #8c8c8c;
  border-radius: 2px;
}

.tabbar {
  height: 18px;
  flex: none;
  display: flex;
  align-items: center;
  font-size: 8.2px;
}
.tabnav {
  width: 75px;
  padding-left: 5px;
  box-sizing: border-box;
  display: flex;
}
.addtab {
  width: 17px;
  height: 15px;
  box-sizing: border-box;
  background: #fff;
  border-left: 1px solid #e2e0de;
  display: flex;
  align-items: center;
  justify-content: flex-end;
  padding-right: 4px;
}
.tab {
  height: 16px;
  flex: none;
  display: flex;
  align-items: center;
  justify-content: center;
  white-space: nowrap;
}
.tab.current {
  background: #fff;
  color: #222;
  font-weight: 700;
  border-bottom: 2px solid #0f766e;
  box-sizing: border-box;
}
.tab.plain {
  color: #444;
  border-right: 1px solid #d5d3d0;
  height: 10px;
}

.sidebar {
  width: 38px;
  flex: none;
  border-left: 1px solid #dddbd9;
  box-sizing: border-box;
  display: flex;
  flex-direction: column;
  align-items: center;
  position: relative;
  padding-top: 1px;
}
.side-btn {
  height: 29px;
  display: flex;
  align-items: center;
  justify-content: center;
  flex: none;
}
.side-btn.burger {
  height: 26px;
  margin-bottom: 2px;
}
.grip {
  position: absolute;
  left: -1px;
  top: 267px;
  width: 5px;
  height: 51px;
  background: #a3a1a0;
}
.grip::after {
  content: "";
  position: absolute;
  left: 1px;
  top: 24px;
  width: 3px;
  height: 3px;
  background: #fff;
}

.status {
  height: 16px;
  flex: none;
  display: flex;
  border-top: 1px solid #e4e2e0;
  box-sizing: border-box;
  font-size: 8.5px;
  color: #444;
}
.st {
  flex: none;
  display: flex;
  align-items: center;
  box-sizing: border-box;
  border-right: 1px solid #e4e2e0;
  white-space: nowrap;
}
.st-disk {
  width: 22px;
  justify-content: center;
  border-right: 0;
}
.st-sheet {
  width: 173px;
  padding-left: 5px;
}
.st-blank {
  width: 175px;
}
.st-style {
  width: 189px;
  padding-left: 5px;
}
.st-lang {
  width: 196px;
  justify-content: center;
  padding-left: 12px;
}
.st-e1 {
  width: 46px;
}
.st-sel {
  width: 32px;
  padding-left: 7px;
  gap: 2px;
}
.selbox {
  width: 11px;
  height: 7px;
  border: 1px solid #4a90c8;
  background: #e8f2fa;
}
.ibeam {
  width: 1px;
  height: 11px;
  background: #555;
}
.st-e2 {
  width: 18px;
}
.st-e3 {
  width: 20px;
}
.st-sum {
  width: 200px;
  justify-content: center;
}
.st-zoom {
  flex: 1;
  border-right: 0;
  padding-left: 5px;
}
.st-zoom b {
  font-size: 11px;
  font-weight: 600;
}
.st-zoom em {
  font-style: normal;
  margin-left: 9px;
}
.slider {
  width: 65px;
  height: 1px;
  margin: 0 5px;
  background: #777;
  position: relative;
}
.knob {
  position: absolute;
  left: 31px;
  top: -3px;
  width: 2px;
  height: 6px;
  background: #f6f5f4;
  border: 1px solid #666;
}
</style>
